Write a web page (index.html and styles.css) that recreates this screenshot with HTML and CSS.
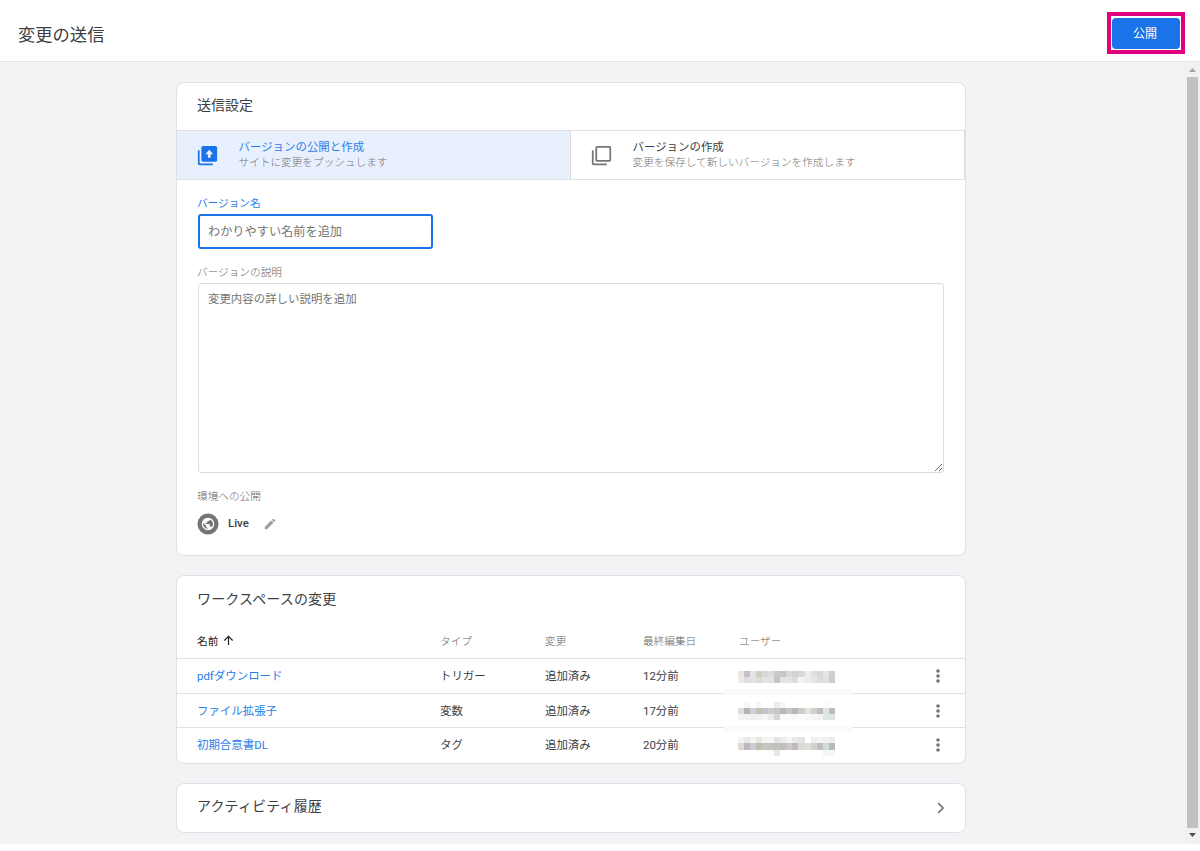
FILE: index.html
```html
<!DOCTYPE html>
<html lang="ja">
<head>
  <meta charset="UTF-8" />
  <meta name="viewport" content="width=device-width, initial-scale=1.0" />
  <title>変更の送信</title>
  <link rel="stylesheet" href="styles.css">
</head>
<body>

  <header class="header">
    <h1>変更の送信</h1>
    <div class="highlight">
      <button class="publish-button">公開</button>
    </div>
  </header>

  <div class="page">
    <main class="content">

      <section class="card settings">
        <h2 class="card-title">送信設定</h2>
        <div class="tabs">
          <div class="tab active">
            <svg class="tab-icon" viewBox="0 0 24 24">
              <path fill="currentColor" d="M3 6H1v15c0 1.1.9 2 2 2h15v-2H3V6z" />
              <path fill="currentColor" d="M21 1H7c-1.1 0-2 .9-2 2v14c0 1.1.9 2 2 2h14c1.1 0 2-.9 2-2V3c0-1.1-.9-2-2-2zm-5.500 9.500v4h-3v-4H9.500L14 5.500l4.500 5z" />
            </svg>
            <div>
              <div class="tab-name">バージョンの公開と作成</div>
              <div class="tab-text">サイトに変更をプッシュします</div>
            </div>
          </div>
          <div class="tab">
            <svg class="tab-icon" viewBox="0 0 24 24">
              <path fill="currentColor" d="M3 6H1v15c0 1.1.9 2 2 2h15v-2H3V6z" />
              <path fill="currentColor" d="M21 1H7c-1.1 0-2 .9-2 2v14c0 1.1.9 2 2 2h14c1.1 0 2-.9 2-2V3c0-1.1-.9-2-2-2zm0 16H7V3h14v14z" />
            </svg>
            <div>
              <div class="tab-name">バージョンの作成</div>
              <div class="tab-text">変更を保存して新しいバージョンを作成します</div>
            </div>
          </div>
        </div>

        <div class="form">
          <label class="label focused" for="versionName">バージョン名</label>
          <input class="name-input" id="versionName" type="text" placeholder="わかりやすい名前を追加">
          <label class="label" for="versionText">バージョンの説明</label>
          <textarea class="description" id="versionText" placeholder="変更内容の詳しい説明を追加"></textarea>
          <div class="label">環境への公開</div>
          <div class="environment">
            <svg class="globe" viewBox="0 0 22 22">
              <circle cx="11" cy="11" r="10.500" fill="#757575" />
              <g transform="translate(3.600 3.600) scale(.617)">
                <path fill="#fff" d="M12 2C6.480 2 2 6.480 2 12s4.480 10 10 10 10-4.480 10-10S17.520 2 12 2zm-1 17.930c-3.950-.490-7-3.850-7-7.930 0-.620.080-1.210.210-1.790L9 15v1c0 1.1.9 2 2 2v1.930zm6.900-2.540c-.260-.810-1-1.390-1.900-1.390h-1v-3c0-.550-.450-1-1-1H8v-2h2c.550 0 1-.450 1-1V7h2c1.1 0 2-.9 2-2v-.410c2.930 1.190 5 4.060 5 7.410 0 2.080-.8 3.970-2.100 5.390z" />
              </g>
            </svg>
            <span class="environment-name">Live</span>
            <svg class="pencil" viewBox="0 0 24 24">
              <path fill="#9e9e9e" d="M3 17.250V21h3.750L17.810 9.940l-3.750-3.750L3 17.250zM20.710 7.040c.390-.390.390-1.020 0-1.410l-2.340-2.340c-.390-.390-1.020-.390-1.410 0l-1.830 1.830 3.750 3.750 1.830-1.830z" />
            </svg>
          </div>
        </div>
      </section>

      <section class="card changes">
        <h2 class="card-title">ワークスペースの変更</h2>
        <div class="row row-head">
          <span class="sorted">名前
            <svg class="arrow" viewBox="0 0 12 12"><path fill="none" stroke="currentColor" stroke-width="1.300" d="M6 11V1.800M1.500 6L6 1.500 10.500 6" /></svg>
          </span>
          <span>タイプ</span>
          <span>変更</span>
          <span>最終編集日</span>
          <span>ユーザー</span>
        </div>
        <div class="row masked">
          <a href="#">pdfダウンロード</a>
          <span>トリガー</span>
          <span>追加済み</span>
          <span>12分前</span>
          <span class="user"></span>
          <svg class="more" viewBox="0 0 4 14"><circle cx="2" cy="2" r="1.800" /><circle cx="2" cy="7" r="1.800" /><circle cx="2" cy="12" r="1.800" /></svg>
        </div>
        <div class="row masked">
          <a href="#">ファイル拡張子</a>
          <span>変数</span>
          <span>追加済み</span>
          <span>17分前</span>
          <span class="user"></span>
          <svg class="more" viewBox="0 0 4 14"><circle cx="2" cy="2" r="1.800" /><circle cx="2" cy="7" r="1.800" /><circle cx="2" cy="12" r="1.800" /></svg>
        </div>
        <div class="row">
          <a href="#">初期合意書DL</a>
          <span>タグ</span>
          <span>追加済み</span>
          <span>20分前</span>
          <span class="user"></span>
          <svg class="more" viewBox="0 0 4 14"><circle cx="2" cy="2" r="1.800" /><circle cx="2" cy="7" r="1.800" /><circle cx="2" cy="12" r="1.800" /></svg>
        </div>
      </section>

      <section class="card history">
        <h2 class="card-title">アクティビティ履歴</h2>
        <svg class="chevron" viewBox="0 0 8 12"><path fill="none" stroke="#757575" stroke-width="1.700" d="M1.200 1.200L6 6l-4.800 4.800" /></svg>
      </section>

    </main>

    <div class="scrollbar">
      <svg class="scroll-arrow" viewBox="0 0 7 4"><path fill="#a3a3a3" d="M0 4l3.500-4L7 4z" /></svg>
      <div class="thumb"></div>
      <svg class="scroll-arrow" viewBox="0 0 7 4"><path fill="#505050" d="M0 0h7L3.500 4z" /></svg>
    </div>
  </div>

  <script>
    // Masked user names: one list of 16 colours per mosaic line
    const masks = [
      [
        'e8e6e3 c9c0c7 e3e3e9 d0cebf d8d8d8 dcdcdc c9c9c9 c6c6c0 d8d8d8 d5d2d7 d8d8d8 eeeeee dedede d8d8d8 e3e8e6 cdd1d1',
        'ececea e1dde1 e4e1e5 dcdcd5 e4e4e4 e2e2e2 c6c4c6 e3e3df e3e3e3 e0dae0 f3f5f3 ebebe9 e6e6e6 dededc dde2df cacecd'
      ],
      [
        'ffffff f7f7f7 ffffff f6f6f4 ffffff ffffff ececec f7f7f5 ffffff ffffff ffffff ffffff ffffff ffffff fafafa ffffff',
        'dcdcd9 b9b0b6 ced0da c2beb0 c3c3c7 cccccc c9c6c4 beb6b0 c7c7c7 bdb6c0 cccdc8 e3e5dd cfcfcf bebac2 dfe5e2 b8bebc',
        'f3f3f3 f4f4f4 f0eef0 f1f1f1 f5f5f5 ececec d5d6da fafafa fafafa f8f8f8 fbfbfb f7f7f7 f5f5f5 f2f2f2 dfe4e4 e0e4e4'
      ],
      [
        'f4f4f4 e8e6ec f3f3f3 e7e7e2 f3f3f3 f3f3f3 e3e3e3 ebebeb f5f5f5 ebebe6 e1e4df ffffff f0f0f0 f2f2f2 eff2f0 ecefed',
        'dadad8 c2b7c0 cccbd6 c0bdb1 c7c7c1 c3c3c3 c2c0bc c1beb8 c9c9c9 c2b7c3 dadcd5 dce0d7 d2d2d2 bfbcc3 d2dad8 b4bbb8',
        'ffffff ffffff ffffff ffffff ffffff fcfcfc e6e6ea ffffff ffffff ffffff ffffff ffffff ffffff ffffff f4f6f4 f5f7f5'
      ]
    ];

    document.querySelectorAll('.user').forEach((user, index) => {
      masks[index].forEach((line) => {
        line.split(' ').forEach((color) => {
          const cell = document.createElement('i');
          cell.style.background = '#' + color;
          user.appendChild(cell);
        });
      });
    });
  </script>

</body>
</html>
```
FILE: styles.css
```css
* {
  box-sizing: border-box;
}

body {
  margin: 0;
  background: #ffffff;
  color: #3c4043;
  font-family: Roboto, "Noto Sans CJK JP", sans-serif;
  font-size: 11.45px;
  font-weight: 400;
  overflow: hidden;
}

h1,
h2 {
  margin: 0;
  font-weight: 400;
}

svg {
  display: block;
  flex: none;
}

.header {
  display: flex;
  justify-content: space-between;
  align-items: flex-start;
  height: 62px;
  padding: 12px 15px 0 18px;
  border-bottom: 1px solid #e4e4e4;
}

.header h1 {
  font-size: 17.3px;
  line-height: 46px;
}

.highlight {
  width: 78px;
  height: 42px;
  padding: 2px 1px 1px;
  border: 4px solid #e0007f;
}

.publish-button {
  display: block;
  width: 100%;
  height: 31px;
  padding: 2px 2px 0 0;
  border: none;
  border-radius: 4px;
  background: #1a73e8;
  color: #ffffff;
  font: 400 12px/29px Roboto, "Noto Sans CJK JP", sans-serif;
}

.page {
  display: flex;
  justify-content: space-between;
  height: 782px;
  background: #f1f3f4;
}

.content {
  display: flex;
  flex-direction: column;
  gap: 19px;
  width: 790px;
  margin: 20px 0 0 176px;
}

.card {
  border: 1px solid #dfe1e5;
  border-radius: 8px;
  background: #ffffff;
  overflow: hidden;
}

.card-title {
  padding-left: 20px;
  font-size: 14px;
  line-height: 46px;
}

.settings {
  height: 474px;
}

.settings .card-title {
  height: 47px;
  line-height: 44px;
}

.tabs {
  display: grid;
  grid-template-columns: 1fr 1fr;
  height: 50px;
  border: 1px solid #dfe1e5;
  border-width: 1px 0;
}

.tab {
  display: flex;
  align-items: center;
  gap: 20.5px;
  padding-left: 20px;
  border-right: 1px solid #dadce0;
}

.tab.active {
  background: #e8f0fe;
}

.tab-icon {
  width: 21px;
  height: 21px;
  color: #757575;
}

.tab.active .tab-icon {
  color: #1a73e8;
}

.tab.active .tab-name {
  color: #2a7de9;
}

.tab-name {
  line-height: 15px;
}

.tab-text {
  color: #757575;
  font-size: 10.65px;
  font-weight: 300;
  line-height: 15px;
}

.form {
  padding: 15px 20px 0;
}

.label {
  display: block;
  color: #666666;
  font-size: 10.65px;
  font-weight: 300;
  line-height: 17px;
}

.label.focused {
  color: #2a7de9;
  font-weight: 400;
}

.name-input,
.description {
  display: block;
  border: 1px solid #dadce0;
  border-radius: 3px;
  background: #ffffff;
  font-family: inherit;
  font-weight: 400;
  outline: none;
}

.name-input {
  width: 235px;
  height: 35px;
  margin: 2px 0 15px 1px;
  padding: 0 9px 0 8px;
  border: 2px solid #1a73e8;
  font-size: 12.2px;
}

.description {
  width: 746px;
  height: 190px;
  margin: 2px 0 15px 1px;
  padding: 7px 9px;
  font-size: 11.45px;
  line-height: 17px;
}

.name-input::placeholder,
.description::placeholder {
  color: #757575;
}

.environment {
  display: flex;
  align-items: center;
  height: 22px;
  margin-top: 8px;
}

.globe {
  width: 22px;
  height: 22px;
}

.environment-name {
  margin: -3px 0 0 9px;
  font-weight: 500;
}

.pencil {
  width: 14px;
  height: 14px;
  margin-left: 14px;
}

.changes {
  height: 189px;
}

.changes .card-title,
.history .card-title {
  letter-spacing: 0.15px;
}

.row {
  position: relative;
  display: grid;
  grid-template-columns: 243px 105px 98px 96px 197px 4px;
  align-items: center;
  height: 34.6px;
  padding: 0 0 1px 20px;
  border-top: 1px solid #dfe1e5;
}

/* pale strip left by the mask between two rows */
.masked::after {
  content: "";
  position: absolute;
  z-index: 1;
  top: 30px;
  left: 547px;
  width: 129px;
  height: 6px;
  background: #fafafa;
}

.masked + .masked::after {
  top: 32px;
}

.row a {
  color: #2a7de9;
  text-decoration: none;
}

.row-head {
  height: 36px;
  padding-bottom: 0;
  border-top: none;
  color: #666666;
  font-size: 10.65px;
  font-weight: 300;
}

.sorted {
  display: flex;
  align-items: center;
  gap: 5px;
  color: #202124;
  font-weight: 400;
}

.arrow {
  width: 11px;
  height: 11px;
}

.user {
  display: grid;
  grid-template-columns: repeat(16, 6.06px);
  grid-auto-rows: 6.06px;
  margin: 3px 0 0 -1px;
}

.row:last-child .user {
  margin-top: 4px;
}

.more {
  width: 4px;
  height: 14px;
  margin-top: 2px;
  fill: #757575;
}

.history {
  display: flex;
  justify-content: space-between;
  align-items: center;
  height: 50px;
  padding-right: 20px;
}

.history .card-title {
  padding-bottom: 4px;
}

.chevron {
  width: 8px;
  height: 12px;
}

.scrollbar {
  display: flex;
  flex-direction: column;
  align-items: center;
  gap: 5px;
  width: 15px;
  padding-top: 6px;
  background: #f1f1f1;
}

.thumb {
  width: 11px;
  height: 751px;
  background: #c1c1c1;
}

.scroll-arrow {
  width: 7px;
  height: 4px;
}
```
